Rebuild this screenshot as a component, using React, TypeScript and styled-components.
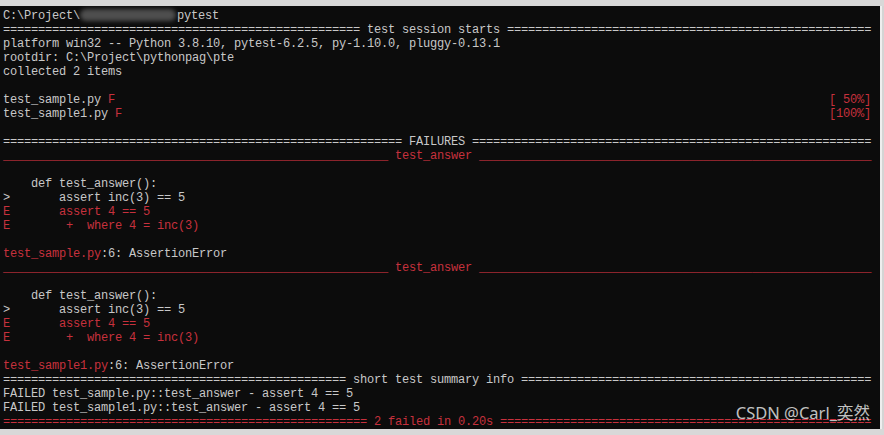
import React from "react";
import styled, { createGlobalStyle } from "styled-components";

const COLS = 124;
const CH = 7;

const Global = createGlobalStyle`
  html, body { margin: 0; padding: 0; background: #d6d6d6; }
  body { width: 884px; height: 435px; overflow: hidden; }
`;

const Window = styled.div`
  position: relative;
  width: 884px;
  height: 435px;
  display: flex;
  flex-direction: column;
  background: #d6d6d6;
`;

const TopBar = styled.div`
  height: 6px;
  background: #d8d8d8;
`;

const Body = styled.div`
  display: flex;
  height: 423px;
`;

const Terminal = styled.div`
  width: 877px;
  background: #0c0c0c;
  padding: 3px 0 0 3px;
  box-sizing: border-box;
  overflow: hidden;
`;

const ScrollEdge = styled.div`
  width: 7px;
  display: flex;
  background: #d4d4d4;
  &::before {
    content: "";
    width: 3px;
    background: #0c0c0c;
  }
  &::after {
    content: "";
    width: 2px;
    background: #eeeeee;
  }
`;

const BottomBar = styled.div`
  flex: 1;
  background: #d8d8d8;
`;

const Screen = styled.div`
  width: ${COLS * CH}px;
  font-family: "Liberation Mono", "DejaVu Sans Mono", monospace;
  font-size: 12px;
  letter-spacing: -0.2px;
  color: #c8c8c8;
`;

const Line = styled.div<{ $tone?: "red" }>`
  height: 14px;
  line-height: 14px;
  white-space: pre;
  color: ${(p) => (p.$tone === "red" ? "#c7313d" : "inherit")};
`;

const SplitLine = styled(Line)`
  display: flex;
  justify-content: space-between;
`;

const Red = styled.span`
  color: #c7313d;
`;

const Redacted = styled.span`
  display: inline-block;
  vertical-align: middle;
  width: 96px;
  height: 12px;
  margin: 0 1px 2px 0;
  border-radius: 6px;
  background: #4e4e4e;
  filter: blur(2px);
`;

const Watermark = styled.div`
  position: absolute;
  right: 14px;
  bottom: 12px;
  font-family: "Noto Sans", "Noto Sans CJK SC", sans-serif;
  font-size: 16.5px;
  line-height: 20px;
  color: rgba(235, 235, 235, 0.82);
  white-space: nowrap;
`;

function rule(ch: string, label: string) {
  const total = COLS - label.length;
  const left = Math.floor(total / 2);
  return ch.repeat(left) + label + ch.repeat(total - left);
}

const Blank = () => <Line> </Line>;

function FailureBlock({ file }: { file: string }) {
  return (
    <>
      <Line $tone="red">{rule("_", " test_answer ")}</Line>
      <Blank />
      <Line>{"    def test_answer():"}</Line>
      <Line>{">       assert inc(3) == 5"}</Line>
      <Line $tone="red">{"E       assert 4 == 5"}</Line>
      <Line $tone="red">{"E        +  where 4 = inc(3)"}</Line>
      <Blank />
      <Line>
        <Red>{file}</Red>
        {":6: AssertionError"}
      </Line>
    </>
  );
}

export default function App() {
  return (
    <>
      <Global />
      <Window>
        <TopBar />
        <Body>
          <Terminal>
            <Screen>
              <Line>
                {"C:\\Project\\"}
                <Redacted />
                {"pytest"}
              </Line>
              <Line>{rule("=", " test session starts ")}</Line>
              <Line>{"platform win32 -- Python 3.8.10, pytest-6.2.5, py-1.10.0, pluggy-0.13.1"}</Line>
              <Line>{"rootdir: C:\\Project\\pythonpag\\pte"}</Line>
              <Line>{"collected 2 items"}</Line>
              <Blank />
              <SplitLine>
                <span>
                  {"test_sample.py "}
                  <Red>F</Red>
                </span>
                <Red>{"[ 50%]"}</Red>
              </SplitLine>
              <SplitLine>
                <span>
                  {"test_sample1.py "}
                  <Red>F</Red>
                </span>
                <Red>{"[100%]"}</Red>
              </SplitLine>
              <Blank />
              <Line>{rule("=", " FAILURES ")}</Line>
              <FailureBlock file="test_sample.py" />
              <FailureBlock file="test_sample1.py" />
              <Line>{rule("=", " short test summary info ")}</Line>
              <Line>{"FAILED test_sample.py::test_answer - assert 4 == 5"}</Line>
              <Line>{"FAILED test_sample1.py::test_answer - assert 4 == 5"}</Line>
              <Line $tone="red">{rule("=", " 2 failed in 0.20s ")}</Line>
            </Screen>
          </Terminal>
          <ScrollEdge />
        </Body>
        <BottomBar />
        <Watermark>CSDN @Carl_奕然</Watermark>
      </Window>
    </>
  );
}
